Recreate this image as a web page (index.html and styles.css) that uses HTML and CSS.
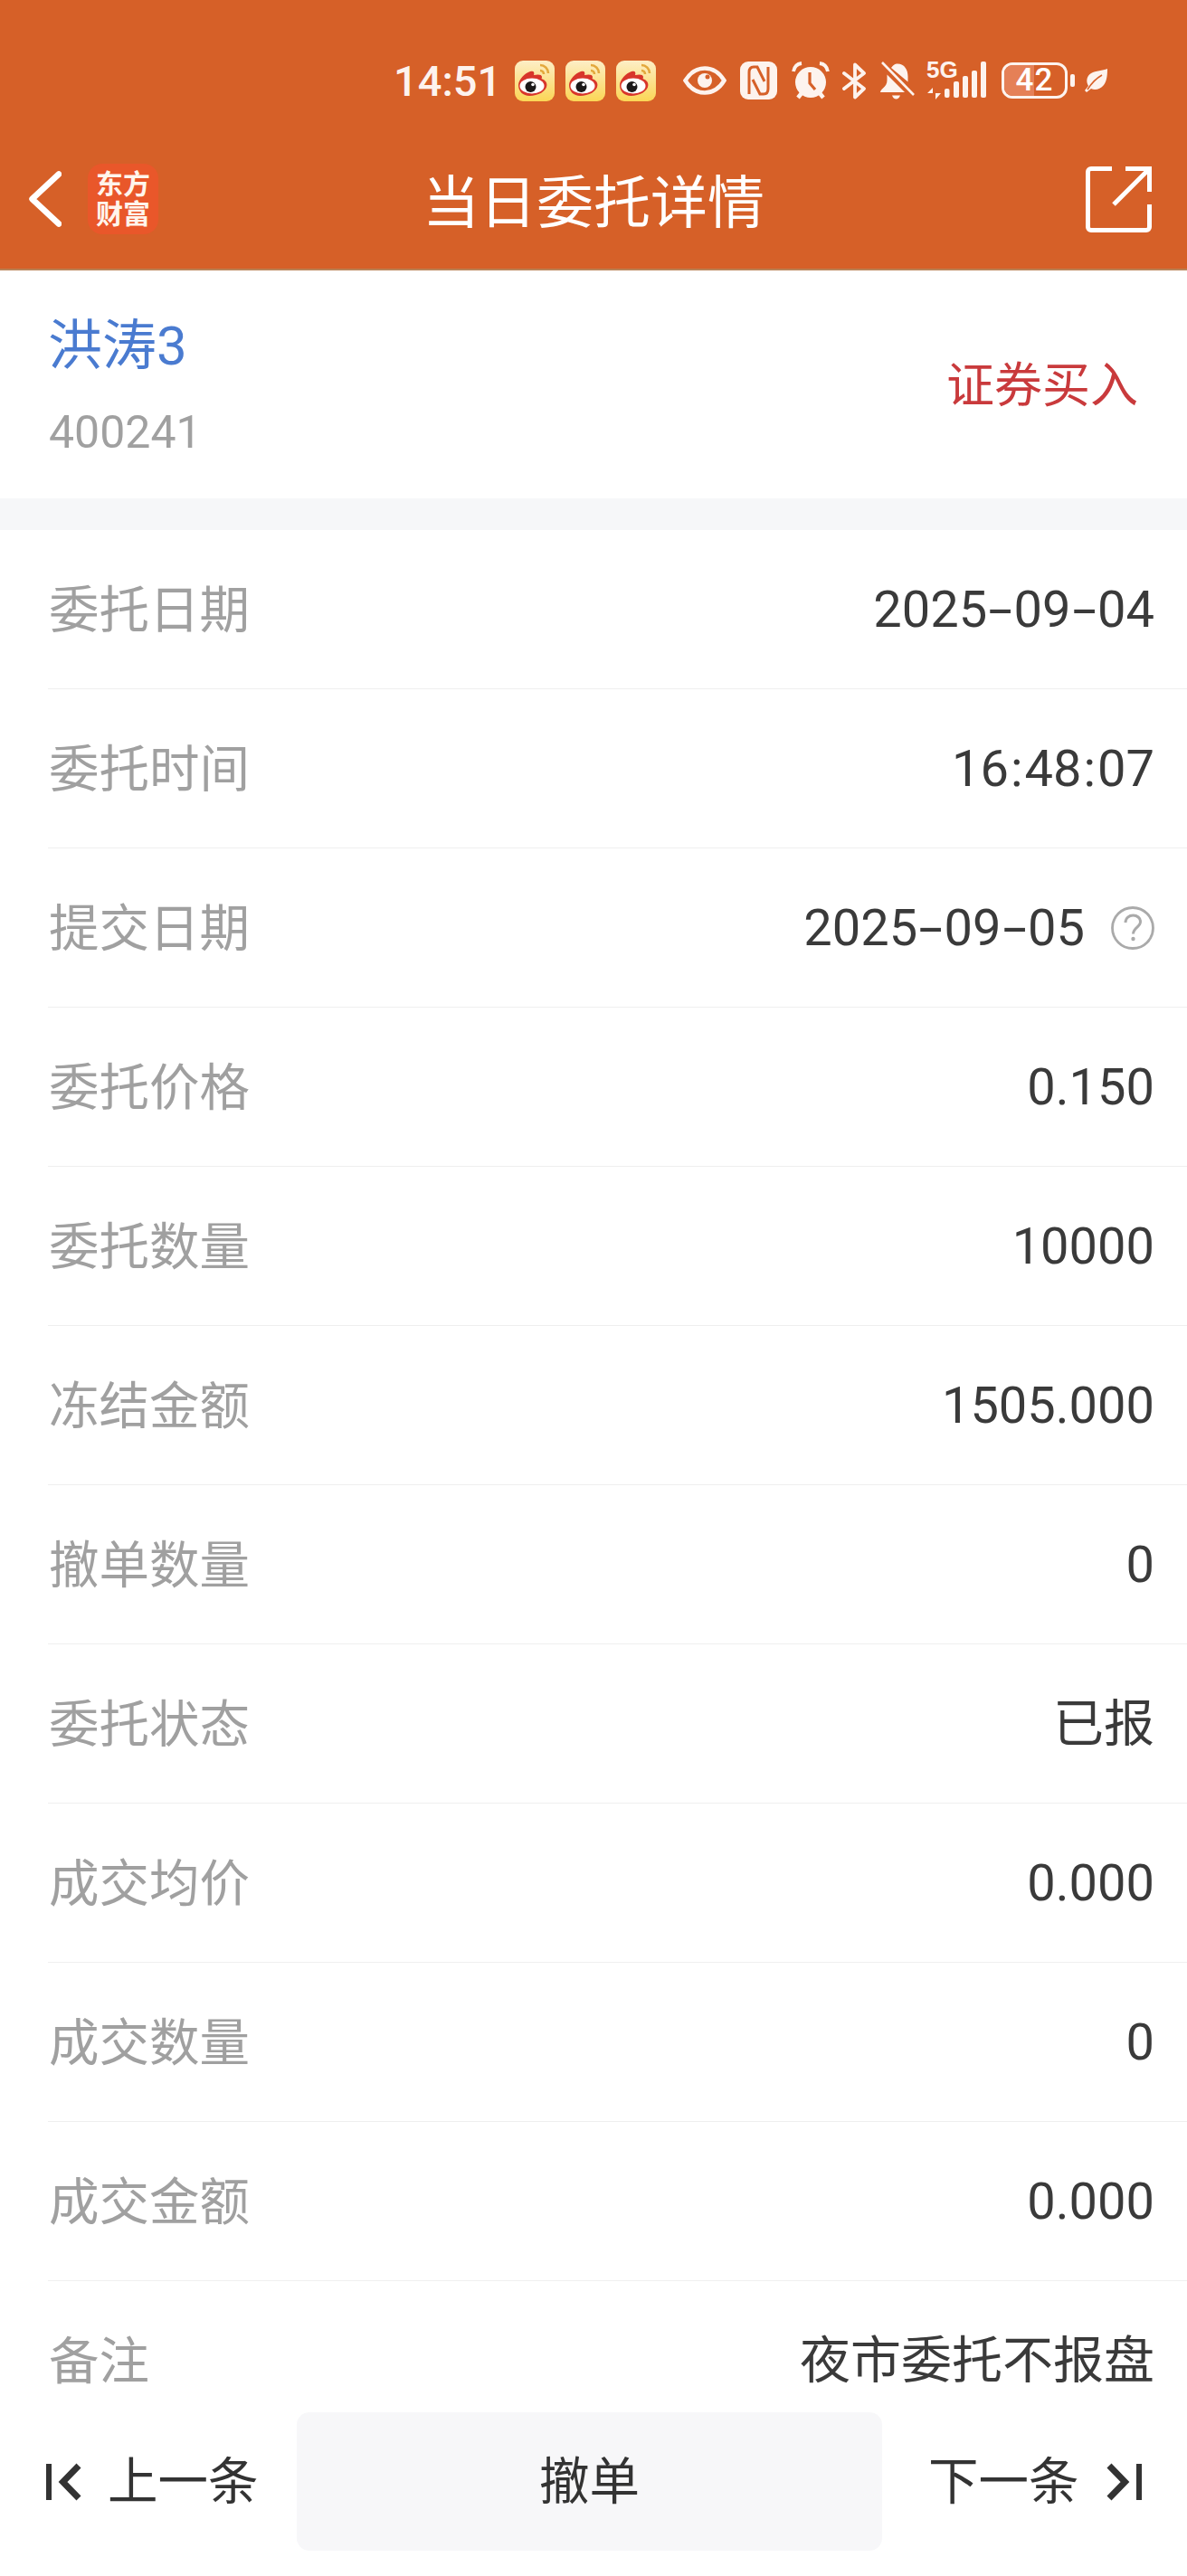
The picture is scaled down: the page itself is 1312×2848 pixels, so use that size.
FILE: index.html
```html
<!DOCTYPE html>
<html lang="zh-CN">
<head>
<meta charset="utf-8">
<title>当日委托详情</title>
<link rel="stylesheet" href="styles.css">
</head>
<body>
<div class="page">
  <header class="header">
    <div class="status">
      <span class="time">14:51</span>
      <div class="apps">
        <svg class="weibo" viewBox="0 0 44 45"><defs><linearGradient id="wb" x1="0" y1="0" x2="0" y2="1"><stop offset="0" stop-color="#fdeec6"/><stop offset="1" stop-color="#fbd656"/></linearGradient></defs><rect width="44" height="45" rx="9" fill="url(#wb)"/><path d="M28 6a9 9 0 0 1 9 9M28 12a4 4 0 0 1 4 4" transform="translate(0 -1)" fill="none" stroke="#e3a83c" stroke-width="2.6"/><path d="M4 27c0-6 7-13 13-15 4-1.300 5 1 4 4 4-1 9-1 9 2 0 1-.4 2-.6 2 3 1 6 3 6 7 0 7-10 12-19 12C9 39 4 34 4 27z" fill="#d8352a"/><ellipse cx="19" cy="28" rx="13.500" ry="8.500" fill="#fff"/><circle cx="17.500" cy="29" r="6" fill="#1c1a1a"/><circle cx="20" cy="26.500" r="1.800" fill="#fff"/></svg>
        <svg class="weibo" viewBox="0 0 44 45"><rect width="44" height="45" rx="9" fill="url(#wb)"/><path d="M28 6a9 9 0 0 1 9 9M28 12a4 4 0 0 1 4 4" transform="translate(0 -1)" fill="none" stroke="#e3a83c" stroke-width="2.6"/><path d="M4 27c0-6 7-13 13-15 4-1.300 5 1 4 4 4-1 9-1 9 2 0 1-.4 2-.6 2 3 1 6 3 6 7 0 7-10 12-19 12C9 39 4 34 4 27z" fill="#d8352a"/><ellipse cx="19" cy="28" rx="13.500" ry="8.500" fill="#fff"/><circle cx="17.500" cy="29" r="6" fill="#1c1a1a"/><circle cx="20" cy="26.500" r="1.800" fill="#fff"/></svg>
        <svg class="weibo" viewBox="0 0 44 45"><rect width="44" height="45" rx="9" fill="url(#wb)"/><path d="M28 6a9 9 0 0 1 9 9M28 12a4 4 0 0 1 4 4" transform="translate(0 -1)" fill="none" stroke="#e3a83c" stroke-width="2.6"/><path d="M4 27c0-6 7-13 13-15 4-1.300 5 1 4 4 4-1 9-1 9 2 0 1-.4 2-.6 2 3 1 6 3 6 7 0 7-10 12-19 12C9 39 4 34 4 27z" fill="#d8352a"/><ellipse cx="19" cy="28" rx="13.500" ry="8.500" fill="#fff"/><circle cx="17.500" cy="29" r="6" fill="#1c1a1a"/><circle cx="20" cy="26.500" r="1.800" fill="#fff"/></svg>
      </div>
      <svg class="ic-eye" viewBox="0 0 48 32"><path d="M2.500 16C8 7 15 2.500 24 2.500S40 7 45.500 16C40 25 33 29.500 24 29.500S8 25 2.500 16z" fill="none" stroke="#fdf3ee" stroke-width="4.500"/><circle cx="24" cy="16" r="8" fill="#fdf3ee"/><circle cx="27" cy="12" r="2.500" fill="#d66028"/></svg>
      <svg class="ic-nfc" viewBox="0 0 41 42"><rect width="41" height="42" rx="9" fill="#fdf3ee"/><path d="M10 36V12c0-3 1-6 5-6h4l8 16M31 6v24c0 3-1 6-5 6h-4l-8-16" fill="none" stroke="#d66028" stroke-width="3"/></svg>
      <svg class="ic-alarm" viewBox="0 0 42 42"><circle cx="21" cy="23" r="17" fill="#fdf3ee"/><path d="M2 11C3 5 7 2.500 11 2M40 11c-1-6-5-8.500-9-9" fill="none" stroke="#fdf3ee" stroke-width="3.800"/><path d="M7 40l4-5M35 40l-4-5" stroke="#fdf3ee" stroke-width="4.500"/><path d="M20 12v12l6 7" fill="none" stroke="#d66028" stroke-width="3.200"/></svg>
      <svg class="ic-bt" viewBox="0 0 27 41"><path d="M2 12l22 17-10 9.500V2.500L24 12 2 29" fill="none" stroke="#fdf3ee" stroke-width="3.800" stroke-linejoin="round" stroke-linecap="round"/></svg>
      <svg class="ic-bell" viewBox="0 0 38 44"><path d="M12 8c3-3.500 4-4.500 7-4.500 8 0 11.500 7 11.500 14v6L12 8zM7.500 15.500L27 35H0c0-1.500 1-2.500 3-4.500 3-3 4.500-5 4.500-9v-6zM33 33l1 2h-1z" fill="#fdf3ee"/><path d="M2 2l35 36" stroke="#fdf3ee" stroke-width="2.600"/><path d="M13 38.500h9c-1 2.500-2.500 4-4.500 4s-3.500-1.500-4.500-4z" fill="#fdf3ee"/></svg>
      <div class="net">
        <span class="five-g">5G</span>
        <svg class="ic-signal" viewBox="0 0 66 42"><path d="M7 29v6H1zM10 42v-7h6z" fill="#fdf3ee"/><rect x="20" y="30" width="5.500" height="10" rx="2" fill="#fdf3ee"/><rect x="30" y="22" width="6" height="18" rx="2" fill="#fdf3ee"/><rect x="40" y="16" width="6" height="24" rx="2" fill="#fdf3ee"/><rect x="50" y="10" width="6" height="30" rx="2" fill="#fdf3ee"/><rect x="60" y="0" width="6" height="40" rx="2" fill="#fdf3ee"/></svg>
      </div>
      <div class="battery"><span class="battery-level"></span><span class="battery-num">42</span></div>
      <span class="battery-cap"></span>
      <svg class="ic-leaf" viewBox="0 0 26 26"><path d="M26 0c0 4 0 13-4 18-4 5-10 6-14 4L3 26l-2-2 4-5C2 14 3 8 8 5c5-3 13-3 18-5z" fill="#fdf3ee"/><path d="M4 23C9 15 13 11 20 7" fill="none" stroke="#d66028" stroke-width="1.600"/></svg>
    </div>
    <nav class="nav">
      <div class="nav-left">
        <svg class="ic-back" viewBox="0 0 36 62"><path d="M33 3.500L3.500 31 33 58.500" fill="none" stroke="#fff" stroke-width="6.500" stroke-linecap="round" stroke-linejoin="round"/></svg>
        <div class="logo"><span class="logo-text">东方财富</span></div>
      </div>
      <h1 class="title">当日委托详情</h1>
      <div class="nav-right">
        <svg class="ic-share" viewBox="0 0 73 73"><path d="M29 2.500H6a3.500 3.500 0 0 0-3.500 3.500v61a3.500 3.500 0 0 0 3.500 3.500h61a3.500 3.500 0 0 0 3.500-3.500V42M44 2.500h26.500V28M70 3L31 42" fill="none" stroke="#fff" stroke-width="5"/></svg>
      </div>
    </nav>
  </header>

  <section class="stock">
    <div class="stock-id">
      <div class="stock-name">洪涛3</div>
      <div class="stock-code">400241</div>
    </div>
    <div class="stock-action">证券买入</div>
  </section>

  <main class="list">
    <div class="row"><span class="label">委托日期</span><span class="value"><span>2025<span class="dash">-</span>09<span class="dash">-</span>04</span></span></div>
    <div class="row"><span class="label">委托时间</span><span class="value"><span>16<span class="colon">:</span>48<span class="colon">:</span>07</span></span></div>
    <div class="row"><span class="label">提交日期</span><span class="value value-help"><span>2025<span class="dash">-</span>09<span class="dash">-</span>05</span><svg class="ic-help" viewBox="0 0 48 48"><circle cx="24" cy="24" r="22.500" fill="none" stroke="#aaa" stroke-width="2.800"/><path d="M16 18c0-5 4-8 8.500-8 4.500 0 8 3 8 7 0 6-8 7-8 13.500" fill="none" stroke="#aaa" stroke-width="3"/><circle cx="24.500" cy="36" r="2.200" fill="#aaa"/></svg></span></div>
    <div class="row"><span class="label">委托价格</span><span class="value">0.150</span></div>
    <div class="row"><span class="label">委托数量</span><span class="value">10000</span></div>
    <div class="row"><span class="label">冻结金额</span><span class="value">1505.000</span></div>
    <div class="row"><span class="label">撤单数量</span><span class="value">0</span></div>
    <div class="row"><span class="label">委托状态</span><span class="value">已报</span></div>
    <div class="row"><span class="label">成交均价</span><span class="value">0.000</span></div>
    <div class="row"><span class="label">成交数量</span><span class="value">0</span></div>
    <div class="row"><span class="label">成交金额</span><span class="value">0.000</span></div>
    <div class="row"><span class="label">备注</span><span class="value">夜市委托不报盘</span></div>
  </main>

  <footer class="bar">
    <div class="pager pager-prev">
      <svg class="ic-skip" viewBox="0 0 39 42"><path d="M3 1v40" stroke="#333" stroke-width="6" fill="none"/><path d="M36 3L18.500 21 36 39" stroke="#333" stroke-width="7" fill="none"/></svg>
      <span class="pager-text">上一条</span>
    </div>
    <div class="cancel"><span class="pager-text">撤单</span></div>
    <div class="pager pager-next">
      <span class="pager-text">下一条</span>
      <svg class="ic-skip" viewBox="0 0 39 42"><path d="M36 1v40" stroke="#333" stroke-width="6" fill="none"/><path d="M3 3l17.500 18L3 39" stroke="#333" stroke-width="7" fill="none"/></svg>
    </div>
  </footer>
</div>
</body>
</html>
```

FILE: styles.css
```css
* { box-sizing: border-box; }
html, body { margin: 0; padding: 0; background: #fff; }
body { font-family: Roboto, "Noto Sans CJK SC", sans-serif; }
.page { width: 1312px; height: 2848px; overflow: hidden; display: flex; flex-direction: column; background: #fff; }

.header { background: #d66028; height: 299px; flex: none; border-bottom: 2px solid #b98256; }
.status { height: 178px; display: flex; align-items: center; padding-left: 435px; color: #fdf3ee; }
.time { width: 134px; font-size: 47px; font-weight: 500; }
.apps { display: flex; gap: 12px; }
.weibo { width: 44px; height: 45px; display: block; }
.ic-eye { width: 48px; height: 32px; margin-left: 30px; }
.ic-nfc { width: 41px; height: 42px; margin-left: 15px; }
.ic-alarm { width: 42px; height: 42px; margin-left: 16px; }
.ic-bt { width: 27px; height: 41px; margin-left: 14px; }
.ic-bell { width: 38px; height: 44px; margin-left: 15px; }
.net { width: 66px; height: 42px; margin-left: 13px; position: relative; }
.five-g { position: absolute; left: 0; top: -6px; font: 700 26px/30px "Liberation Sans Narrow", "Liberation Sans", sans-serif; }
.ic-signal { width: 66px; height: 42px; display: block; }
.battery { width: 73px; height: 40px; margin-left: 17px; border: 3px solid #fdf3ee; border-radius: 12px; position: relative; overflow: hidden; display: flex; align-items: center; justify-content: center; }
.battery-level { position: absolute; left: 0; top: 0; bottom: 0; width: 33px; background: #e58057; }
.battery-num { position: relative; font-size: 35px; line-height: 34px; font-weight: 500; letter-spacing: 1px; color: #fff; }
.battery-cap { width: 5px; height: 14px; margin-left: 3px; border-radius: 2px; background: #fdf3ee; }
.ic-leaf { width: 26px; height: 26px; margin-left: 10px; }

.nav { height: 84px; display: grid; grid-template-columns: 1fr auto 1fr; align-items: center; }
.nav-left { display: flex; align-items: center; padding-left: 32px; }
.ic-back { width: 36px; height: 62px; display: block; }
.logo { width: 78px; height: 78px; margin-left: 29px; padding: 0 9px 4px; border-radius: 16px; background: #e9572a; color: #fff5ec; display: flex; align-items: center; justify-content: center; text-align: center; font: 700 30px/33px "Noto Sans CJK SC", sans-serif; }
.logo-text { display: block; width: 60px; }
.title { margin: 0 0 3px; font: 400 63px/81px "Noto Sans CJK SC", sans-serif; color: #fff; }
.nav-right { display: flex; justify-content: flex-end; padding-right: 39px; }
.ic-share { width: 73px; height: 73px; display: block; }

.stock { height: 252px; flex: none; display: flex; align-items: center; justify-content: space-between; padding: 0 54px; }
.stock-name { margin-left: -1px; font: 400 60px/80px Roboto, "Noto Sans CJK SC", sans-serif; color: #4a7bd0; }
.stock-code { margin-top: 25px; font-size: 50px; line-height: 60px; color: #a0a0a0; }
.stock-action { padding-bottom: 6px; font: 400 53px/70px "Noto Sans CJK SC", sans-serif; color: #c93a3c; }

.list { flex: 1 1 0; min-height: 0; overflow: hidden; border-top: 35px solid #f6f7f9; }
.row { height: 176px; padding: 0 36px 0 54px; display: flex; align-items: center; justify-content: space-between; position: relative; }
.row::after { content: ""; position: absolute; left: 53px; right: 0; bottom: 0; height: 1px; background: #efefef; }
.label { padding-bottom: 7px; font: 400 55.5px/1 "Noto Sans CJK SC", sans-serif; color: #a0a0a0; }
.value { font-size: 56px; line-height: 1; color: #3a3a3a; display: flex; align-items: center; }
.dash { display: inline-block; margin: 0 7px; transform: scaleX(1.7); }
.colon { margin: 0 2px; }
.value-help { gap: 29px; }
.ic-help { width: 48px; height: 48px; display: block; }

.bar { height: 200px; flex: none; background: #fff; display: grid; grid-template-columns: 328px 647px 337px; padding: 19px 0 28px; align-items: stretch; font: 400 55.5px/1 "Noto Sans CJK SC", sans-serif; color: #333; }
.pager { display: flex; align-items: center; }
.pager-text { display: block; padding-bottom: 7px; }
.pager-prev { padding-left: 51px; gap: 29px; }
.pager-next { padding-left: 51px; gap: 30px; }
.ic-skip { width: 39px; height: 42px; display: block; flex: none; }
.cancel { background: #f7f7f9; border-radius: 14px; display: flex; align-items: center; justify-content: center; }
```
